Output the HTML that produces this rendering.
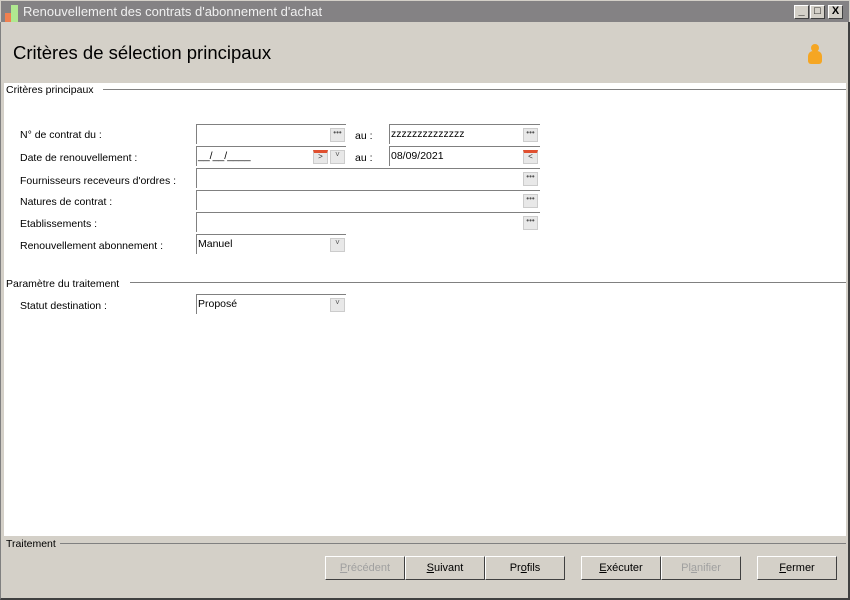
<!DOCTYPE html>
<html><head><meta charset="utf-8"><style>
*{margin:0;padding:0;box-sizing:border-box}
body{width:850px;height:600px;background:#d4d0c8;position:relative;overflow:hidden;font-family:"Liberation Sans",sans-serif;font-size:10.5px;color:#000}
.a{position:absolute}
.tb{left:0;top:0;width:850px;height:22px;background:#848284;border:1px solid #d4d0c8;border-bottom:none}
.ttl{left:23px;top:4px;color:#f0f0f0;font-size:13px}
.wb{top:5px;width:15px;height:14px;background:#d4d0c8;border:1px solid;border-color:#fff #404040 #404040 #fff;font-size:11px;line-height:11px;text-align:center;font-weight:bold}
.white{left:4px;top:83px;width:842px;height:453px;background:#fff}
.lbl{left:20px}
.f{height:20px;background:#fff;border-top:1px solid #808080;border-left:1px solid #808080;padding:3px 0 0 1px;font-size:10.5px}
.btn3{width:15px;height:14px;background:#e8e8e8;border:1px solid #ccc;top:3px;font-size:8px;line-height:8px;text-align:center;color:#555}
.sec{height:1px;background:#808080}
.b{top:556px;height:24px;width:80px;background:#d4d0c8;border:1px solid;border-color:#fff #404040 #404040 #fff;text-align:center;line-height:22px;font-size:11px}
.dis{color:#a0a0a0}
u{text-decoration:underline}
</style></head><body>
<div class="a" style="left:0;top:0;width:850px;height:600px;border:1px solid #808080;border-right:2px solid #404040;border-bottom:2px solid #404040"></div>
<div class="a tb"></div>
<div class="a" style="left:5px;top:13px;width:6px;height:9px;background:#f08050"></div>
<div class="a" style="left:11px;top:5px;width:7px;height:17px;background:#b0e890"></div>
<div class="a ttl">Renouvellement des contrats d'abonnement d'achat</div>
<div class="a wb" style="left:794px">_</div>
<div class="a wb" style="left:810px">□</div>
<div class="a wb" style="left:828px">X</div>
<div class="a" style="left:13px;top:42px;font-size:18.5px">Critères de sélection principaux</div>
<div class="a" style="left:811px;top:44px;width:8px;height:8px;border-radius:50%;background:#f5a623"></div>
<div class="a" style="left:808px;top:51px;width:14px;height:13px;border-radius:5px 5px 3px 3px;background:#f5a623"></div>
<div class="a white"></div>
<div class="a" style="left:6px;top:84px">Critères principaux</div>
<div class="a sec" style="left:103px;top:89px;width:743px"></div>

<div class="a lbl" style="top:129px">N° de contrat du :</div>
<div class="a lbl" style="top:152px">Date de renouvellement :</div>
<div class="a lbl" style="top:175px">Fournisseurs receveurs d'ordres :</div>
<div class="a lbl" style="top:196px">Natures de contrat :</div>
<div class="a lbl" style="top:218px">Etablissements :</div>
<div class="a lbl" style="top:240px">Renouvellement abonnement :</div>
<div class="a" style="left:355px;top:130px">au :</div>
<div class="a" style="left:355px;top:152px">au :</div>

<div class="a f" style="left:196px;top:124px;width:150px"><div class="a btn3" style="left:133px">•••</div></div>
<div class="a f" style="left:389px;top:124px;width:151px">zzzzzzzzzzzzzz<div class="a btn3" style="left:133px">•••</div></div>
<div class="a f" style="left:196px;top:146px;width:150px">__/__/____<div class="a btn3" style="left:116px;color:#333;border-top:3px solid #e05030">&gt;</div><div class="a btn3" style="left:133px">˅</div></div>
<div class="a f" style="left:389px;top:146px;width:151px">08/09/2021<div class="a btn3" style="left:133px;color:#333;border-top:3px solid #e05030">&lt;</div></div>
<div class="a f" style="left:196px;top:168px;width:344px"><div class="a btn3" style="left:326px">•••</div></div>
<div class="a f" style="left:196px;top:190px;width:344px"><div class="a btn3" style="left:326px">•••</div></div>
<div class="a f" style="left:196px;top:212px;width:344px"><div class="a btn3" style="left:326px">•••</div></div>
<div class="a f" style="left:196px;top:234px;width:150px">Manuel<div class="a btn3" style="left:133px">˅</div></div>

<div class="a" style="left:6px;top:278px">Paramètre du traitement</div>
<div class="a sec" style="left:130px;top:282px;width:716px"></div>
<div class="a lbl" style="top:300px">Statut destination :</div>
<div class="a f" style="left:196px;top:294px;width:150px">Proposé<div class="a btn3" style="left:133px">˅</div></div>

<div class="a" style="left:6px;top:538px">Traitement</div>
<div class="a sec" style="left:60px;top:543px;width:786px"></div>
<div class="a b dis" style="left:325px"><u>P</u>récédent</div>
<div class="a b" style="left:405px"><u>S</u>uivant</div>
<div class="a b" style="left:485px">Pr<u>o</u>fils</div>
<div class="a b" style="left:581px"><u>E</u>xécuter</div>
<div class="a b dis" style="left:661px">Pl<u>a</u>nifier</div>
<div class="a b" style="left:757px"><u>F</u>ermer</div>
</body></html>
